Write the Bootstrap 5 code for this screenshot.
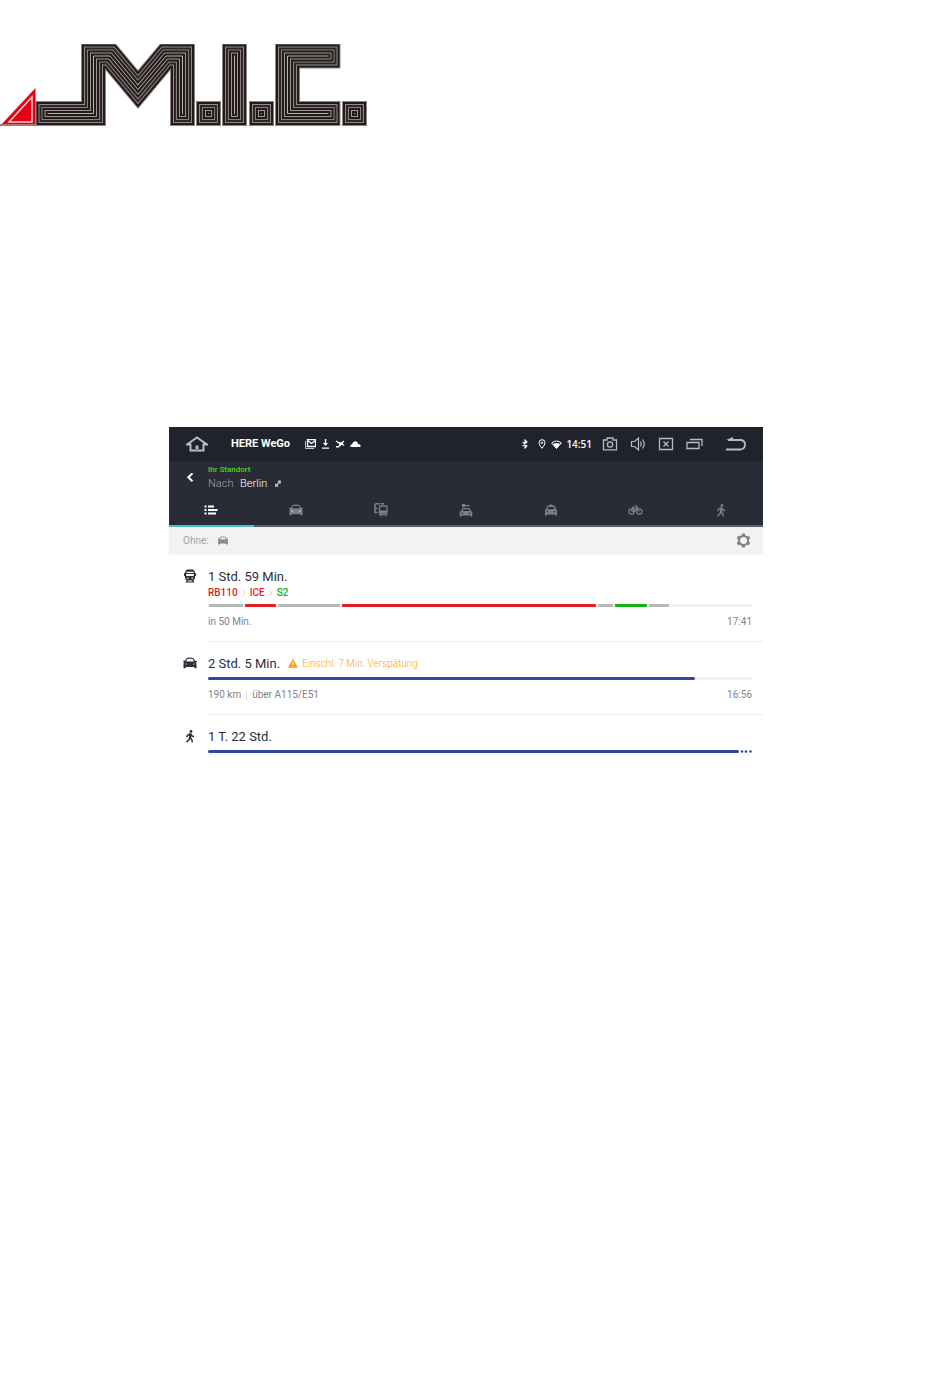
<!DOCTYPE html>
<html lang="de">
<head>
<meta charset="utf-8">
<meta name="viewport" content="width=device-width, initial-scale=1">
<title>HERE WeGo – Routen</title>
<link rel="stylesheet" href="https://cdn.jsdelivr.net/npm/bootstrap@5.3.0/dist/css/bootstrap.min.css">
<style>
  body { font-family: Roboto, "Noto Sans", sans-serif; color: #2b2f3a; background: #fff; }
  svg { display: block; flex: none; }
  button { background: none; border: 0; padding: 0; color: inherit; display: block; }
  .brand-area { padding-top: 44px; margin-bottom: 301px; }
  .brand-area svg { width: 367px; max-width: 100%; }
  .device { margin: 0 187px 0 169px; }
  .status-bar { background: #20232b; color: #fff; height: 34px; padding: 0 17px 0 17px; }
  .app-name { font-size: 11px; line-height: 16px; margin: 0 15px 0 23px; }
  .notes { gap: 5px; }
  .signals { gap: 4px; }
  .clock { font: 600 10px/16px "Open Sans", sans-serif; }
  .controls { gap: 12px; margin-left: 10px; margin-right: 22px; color: #b9bbbf; }
  .soft { color: #b9bbbf; }
  .route-head { background: #292c37; color: #fff; height: 34px; }
  .back-col { width: 39px; padding-left: 17px; }
  .from { color: #4fd80d; font-size: 8px; line-height: 10px; }
  .to { font-size: 11px; line-height: 17px; font-weight: 300; }
  .to span { color: #a0a2aa; }
  .tabs { background: #292c37; color: #7d8088; }
  .tabs button { flex: 1 1 0; height: 32px; border-bottom: 2px solid #5d5d6b; }
  .tabs button.active { color: #fff; border-color: #41c5c0; }
  .tabs svg { margin: 0 auto; }
  .filter { background: #f2f2f2; height: 28px; padding: 0 12px 0 14px; font-size: 10px; color: #a0a3a8; border-bottom: 1px solid #f8f8f8; }
  .filter svg { color: #80848b; }
  .mode { width: 39px; padding: 14px 0 0 14px; flex: none; }
  .trip { padding: 12px 11px 13px 0; min-width: 0; }
  .trip-row + .trip-row .trip { border-top: 1px solid #ededed; }
  .trip-row + .trip-row .mode { padding-top: 16px; }
  .duration { font-size: 13px; line-height: 19px; }
  .lines { font-size: 10px; line-height: 14px; font-weight: 500; gap: 4px; }
  .r { color: #e01e22; } .g { color: #11b211; }
  .track { height: 3px; background: #f2f2f2; margin: 4px 0 9px; }
  .track i { height: 3px; border-right: 1px solid #fff; border-left: 1px solid #fff; border-radius: 2px; }
  .wait { background: #b6b8bb; } .red { background: #e01e22; } .green { background: #11b211; }
  .drive { background: #2f48a5; border-radius: 2px; height: 3px; }
  .dotend { width: 13px; height: 3px; }
  .meta { font-size: 10px; line-height: 12px; color: #7f838a; }
  .meta .bar { width: 1px; height: 9px; background: #dedede; margin: 0 5px; }
  .delay { font-size: 10px; line-height: 16px; color: #ffa50f; font-weight: 300; }
</style>
</head>
<body>
<svg width="0" height="0" class="position-absolute" aria-hidden="true">
  <symbol id="car" viewBox="0 0 14 12"><path fill="currentColor" fill-rule="evenodd" d="M3.600 1Q7 0 10.400 1L11.900 3.800H13.800V5L12.900 5.300 13.500 6.500V11.200H11.400V10H2.600V11.200H.5V6.500L1.100 5.300.2 5V3.800H2.100ZM4.200 2 3.200 4.600H10.800L9.800 2Q7 1.400 4.200 2Z"/><path d="M2 6.800 4 7.300M12 6.800 10 7.300" stroke="#fff" stroke-opacity=".5"/></symbol>
  <symbol id="walk" viewBox="0 0 10 13"><circle cx="6" cy="1.5" r="1.400" fill="currentColor"/><path d="M5.400 4 4.700 7.500 6.700 9.400 7.400 12.400M4.700 7.500 4 9.800 1.400 12.300M5.200 4 2.500 5.200 1.700 7.300M5.800 4 7 6 9.100 6.800" fill="none" stroke="currentColor" stroke-width="1.500"/><path d="M4.400 3.400H6.400L6.200 8H4Z" fill="currentColor"/></symbol>
</svg>

<header class="brand-area">
  <svg viewBox="0 0 367 82" role="img" aria-label="M.I.C.">
    <defs>
      <g id="strokes" fill="none" stroke-linecap="square" stroke-miterlimit="8">
        <path d="M48 69.500H93.500V12H110L138 45.500 166 12H182.500V69.500M208.500 69.500H208.510M234.500 12V69.500M261.500 69.500H261.510M328 12H287.500V69.500H328M354.500 69.500H354.510"/>
      </g>
    </defs>
    <use href="#strokes" stroke="#8b8785" stroke-width="25"/>
    <use href="#strokes" stroke="#231a19" stroke-width="23"/>
    <use href="#strokes" stroke="#8f8b89" stroke-width="19"/>
    <use href="#strokes" stroke="#2f2625" stroke-width="17"/>
    <use href="#strokes" stroke="#85817f" stroke-width="13"/>
    <use href="#strokes" stroke="#231a19" stroke-width="11"/>
    <use href="#strokes" stroke="#9c9997" stroke-width="7"/>
    <use href="#strokes" stroke="#231a19" stroke-width="5"/>
    <use href="#strokes" stroke="#b8b6b5" stroke-width="1"/>
    <path d="M0 82 35.500 44V82Z" fill="#e50012"/>
    <path d="M9 78 32 53V78Z" fill="#e50012" stroke="#f3d3d3" stroke-width="1.500"/>
    <path d="M0 81H35" stroke="#bd6c70" stroke-width="2"/>
  </svg>
</header>

<main class="device">
  <div class="status-bar d-flex align-items-center">
    <button aria-label="Startseite" class="soft"><svg width="22" height="16" viewBox="0 0 22 16" fill="none" stroke="currentColor" stroke-width="2"><path d="M1 8.500 11 1.500 21 8.500H17.500V14.500H4.500V8.500Z"/><path d="M11 9.500V13" stroke-width="3"/></svg></button>
    <span class="app-name fw-bold">HERE WeGo</span>
    <div class="notes d-flex align-items-center">
      <svg width="11" height="10" viewBox="0 0 11 10" fill="none" stroke="#fff"><path d="M.5 2V9.500H9" stroke-opacity=".7"/><path d="M2.500.5H10.500V7.500H2.500ZM2.500 1.500 6.500 4.500 10.500 1.500" stroke-width="1.300"/></svg>
      <svg width="9" height="10" viewBox="0 0 9 10" fill="#fff"><path d="M3.800 0H5.200V4H7L4.500 7 2 4H3.800ZM1 8.600H8V9.800H1Z"/></svg>
      <svg width="10" height="8" viewBox="0 0 10 8" fill="none" stroke="#fff" stroke-width="1.400"><path d="M1 1 4 3 6 3 9 5.500M1 6.800H3.500L8.800 1M4 2 5.500 6"/></svg>
      <svg width="11" height="6" viewBox="0 0 11 6" fill="#fff"><path d="M1.500 6Q0 6 .2 4.500 1 3.300 2 3.200 3 0 5.500.2 8 .5 8 3 10.500 3 10.800 5 10.500 6 9.500 6Z"/></svg>
    </div>
    <div class="signals d-flex align-items-center ms-auto">
      <svg class="me-1" width="8" height="10" viewBox="1 0 8 10" fill="none" stroke="#fff" stroke-width="1.100"><path d="M2.500 2.800 7 7 5 9V1L7 3 2.500 7.200"/></svg>
      <svg width="10" height="10" viewBox="0 0 10 10" fill="none" stroke="#fff"><path d="M5 9.300Q2 6 2 3.700A3 3 0 0 1 8 3.700Q8 6 5 9.300Z"/><circle cx="5" cy="3.700" r=".8"/></svg>
      <svg width="11" height="9" viewBox="0 0 11 9"><path d="M.6 3Q5.500-1 10.400 3L5.500 8.500Z" fill="none" stroke="#fff"/><path d="M2 4Q5.500 2.200 9 4L5.500 8.500Z" fill="#fff"/></svg>
      <span class="clock">14:51</span>
    </div>
    <div class="controls d-flex align-items-center">
      <button aria-label="Foto"><svg width="16" height="14" viewBox="0 0 16 14" fill="none" stroke="currentColor" stroke-width="1.300"><path d="M1.500 3H5V1H11V3H14.500V12.800H1.500Z"/><circle cx="8" cy="7.500" r="2.600"/></svg></button>
      <button aria-label="Lautstärke"><svg width="16" height="14" viewBox="0 0 16 14" fill="none" stroke="currentColor" stroke-width="1.200"><path d="M1.500 4.500H4.500L8.500 1V13L4.500 9.500H1.500ZM10.500 4.500Q12 7 10.500 9.500M12.500 2.500Q16 7 12.500 11.500"/></svg></button>
      <button aria-label="Schließen"><svg width="16" height="14" viewBox="0 0 16 14" fill="none" stroke="currentColor" stroke-width="1.300"><path d="M1.500 1.500H14.500V12.500H1.500ZM5.500 4.500 10.500 9.500M10.500 4.500 5.500 9.500"/></svg></button>
      <button aria-label="Letzte Apps"><svg width="17" height="14" viewBox="0 0 17 14" fill="none" stroke="currentColor" stroke-width="1.300"><path d="M1 5.500H13V11.500H1ZM4 2.500H16V9" /></svg></button>
    </div>
    <button aria-label="Zurück" class="soft"><svg width="21" height="14" viewBox="0 0 21 14" fill="none" stroke="currentColor" stroke-width="1.800"><path d="M3 3H16Q20 3.500 20 7.500T16 12.500H1"/><path d="M1 3 8 0V3Z" fill="currentColor" stroke="none"/></svg></button>
  </div>

  <div class="route-head d-flex">
    <div class="back-col pt-2"><button aria-label="Zurück zur Suche"><svg class="mt-1" width="8" height="10" viewBox="0 0 8 10" fill="none" stroke="#fff" stroke-width="2"><path d="M6.500.3 2.300 4.300 6.500 8.300"/></svg></button></div>
    <div class="pt-1">
      <div class="from fw-medium">Ihr Standort</div>
      <div class="to d-flex align-items-center"><span class="me-1">Nach</span>&nbsp;Berlin <svg class="ms-2" width="6" height="7" viewBox="0 0 6 7" fill="none" stroke="#c5c6ca" stroke-width="1.200"><path d="M1 6 5 1.500M2.800 1.200H5.300V3.500M.7 3.500V6.200H3.200"/></svg></div>
    </div>
  </div>

  <nav class="tabs d-flex" aria-label="Verkehrsmittel">
    <button class="active" aria-label="Alle"><svg width="14" height="10" viewBox="0 0 14 10" fill="none" stroke="currentColor" stroke-width="2"><path d="M.5 1.500H2.500M.5 5H2.500M.5 8.500H2.500M4 1.500H10M4 5H13.500M4 8.500H12"/></svg></button>
    <button aria-label="Auto"><svg width="14" height="12"><use href="#car"/></svg></button>
    <button aria-label="Bus und Bahn"><svg width="14" height="14" viewBox="0 0 14 14" fill="none" stroke="currentColor"><path d="M6 .8H2.300Q1 .8 1 2V9.500H3.500M1 5.500H3.500M7 .8H10" stroke-width="1.500"/><rect x="5.500" y="3" width="7.500" height="8.500" rx="1" stroke-width="1.300"/><path d="M6 9H12.500" stroke-width="3"/><path d="M6 13H7.500M11 13H12.500"/></svg></button>
    <button aria-label="Carsharing"><svg width="14" height="14" viewBox="0 0 14 14"><path d="M3 1H6V2H10.500V3.300H6V4H3Z" fill="currentColor"/><path fill="currentColor" fill-rule="evenodd" d="M3.500 5H10.500L12 8 13.300 9V13.500H11.500V12.500H2.500V13.500H.7V9L2 8ZM4.300 6.200 3.500 8H10.500L9.700 6.200ZM2.500 9.500V10.700H4.500V10ZM11.500 9.500 9.500 10V10.700H11.500Z"/></svg></button>
    <button aria-label="Taxi"><svg width="14" height="12" viewBox="0 0 14 12"><path fill="currentColor" fill-rule="evenodd" d="M5.500.4H8.500V1.500H10.500L12 5 13 6V11.500H11.300V10.500H2.700V11.500H1V6L2 5 3.500 1.500H5.500ZM4.300 3 3.500 5.200H10.500L9.700 3ZM2.500 7V8.300H4.500V7.500ZM11.500 7 9.500 7.500V8.300H11.500Z"/></svg></button>
    <button aria-label="Fahrrad"><svg width="15" height="10" viewBox="0 0 15 10" fill="none" stroke="currentColor" stroke-width="1.200"><circle cx="3.500" cy="6.500" r="2.700"/><circle cx="11.300" cy="6.500" r="2.700"/><path d="M3.500 6.500 5 3H9L6.800 6.500H3.500M6.800 6.500 5 2.500M3.800 2H6M11.300 6.500 8.500.8H7"/></svg></button>
    <button aria-label="Zu Fuß"><svg width="10" height="13"><use href="#walk"/></svg></button>
  </nav>

  <div class="filter d-flex align-items-center">
    <span>Ohne:</span>
    <svg class="ms-2" width="12" height="9" viewBox="0 0 14 12"><use href="#car"/></svg>
    <button class="ms-auto" aria-label="Optionen"><svg width="15" height="15" viewBox="0 0 15 15" fill="none" stroke="currentColor"><circle cx="7.500" cy="7.500" r="4.600" stroke-width="2.200"/><path d="M7.500 .4V2.800M7.500 12.200V14.600M1.400 4 3.400 5.100M11.600 9.900 13.600 11M1.400 11 3.400 9.900M11.600 5.100 13.600 4" stroke-width="3"/></svg></button>
  </div>

  <section>
    <div class="trip-row d-flex">
      <div class="mode"><svg width="14" height="14" viewBox="0 0 14 14"><path fill="currentColor" fill-rule="evenodd" d="M4 .5H10Q12 1.500 12 4L13 4.500V7L12 7.200V9Q11.500 11 10.200 11.200L11.500 13.500H2.500L3.800 11.200Q2.500 11 2 9V7.200L1 7V4.500L2 4Q2 1.500 4 .5ZM3.500 2.800V4H10.500V2.800ZM3.200 5V7H10.800V5ZM4 8.500V9.700H5.500V8.500ZM8.500 8.500V9.700H10V8.500ZM5 11.500 4.500 12.500H9.500L9 11.500Z"/></svg></div>
      <div class="trip flex-fill">
        <div class="duration">1 Std. 59 Min.</div>
        <div class="lines d-flex align-items-center"><span class="r">RB110</span><svg width="4" height="6" viewBox="0 0 4 6" fill="none" stroke="#d0d2d4"><path d="M.5.5 3 3 .5 5.500"/></svg><span class="r">ICE</span><svg width="4" height="6" viewBox="0 0 4 6" fill="none" stroke="#d0d2d4"><path d="M.5.5 3 3 .5 5.500"/></svg><span class="g">S2</span></div>
        <div class="track d-flex">
          <i class="wait" style="width:6.6%"></i><i class="red" style="width:6.1%"></i><i class="wait" style="width:11.8%"></i><i class="red" style="width:47%"></i><i class="wait" style="width:3.2%"></i><i class="green" style="width:6.1%"></i><i class="wait" style="width:4.2%"></i>
        </div>
        <div class="meta d-flex"><span>in 50 Min.</span><span class="ms-auto">17:41</span></div>
      </div>
    </div>
    <div class="trip-row d-flex">
      <div class="mode"><svg width="14" height="12"><use href="#car"/></svg></div>
      <div class="trip flex-fill">
        <div class="duration d-flex align-items-center">2 Std. 5 Min.
          <svg class="ms-2 me-1" width="10" height="9" viewBox="0 0 10 9"><path d="M5 .4 9.600 8.600H.4Z" fill="#ff9c0c" stroke="#ff9c0c" stroke-linejoin="round" stroke-width=".6"/><path d="M5 3V5.800M5 6.700V7.700" stroke="#fff"/></svg>
          <span class="delay">Einschl. 7 Min. Verspätung</span></div>
        <div class="track"><div class="drive" style="width:89.6%"></div></div>
        <div class="meta d-flex align-items-center"><span>190 km</span><span class="bar"></span><span>über A115/E51</span><span class="ms-auto">16:56</span></div>
      </div>
    </div>
    <div class="trip-row d-flex">
      <div class="mode"><svg width="14" height="13"><use href="#walk"/></svg></div>
      <div class="trip flex-fill">
        <div class="duration">1 T. 22 Std.</div>
        <div class="d-flex mt-1"><div class="drive flex-fill"></div><svg class="dotend" viewBox="0 0 13 3" fill="#2f48a5"><circle cx="3" cy="1.500" r="1.300"/><circle cx="7" cy="1.500" r="1.300"/><circle cx="11.500" cy="1.500" r="1.300"/></svg></div>
      </div>
    </div>
  </section>
</main>
<script src="https://cdn.jsdelivr.net/npm/bootstrap@5.3.0/dist/js/bootstrap.bundle.min.js"></script>
</body>
</html>
